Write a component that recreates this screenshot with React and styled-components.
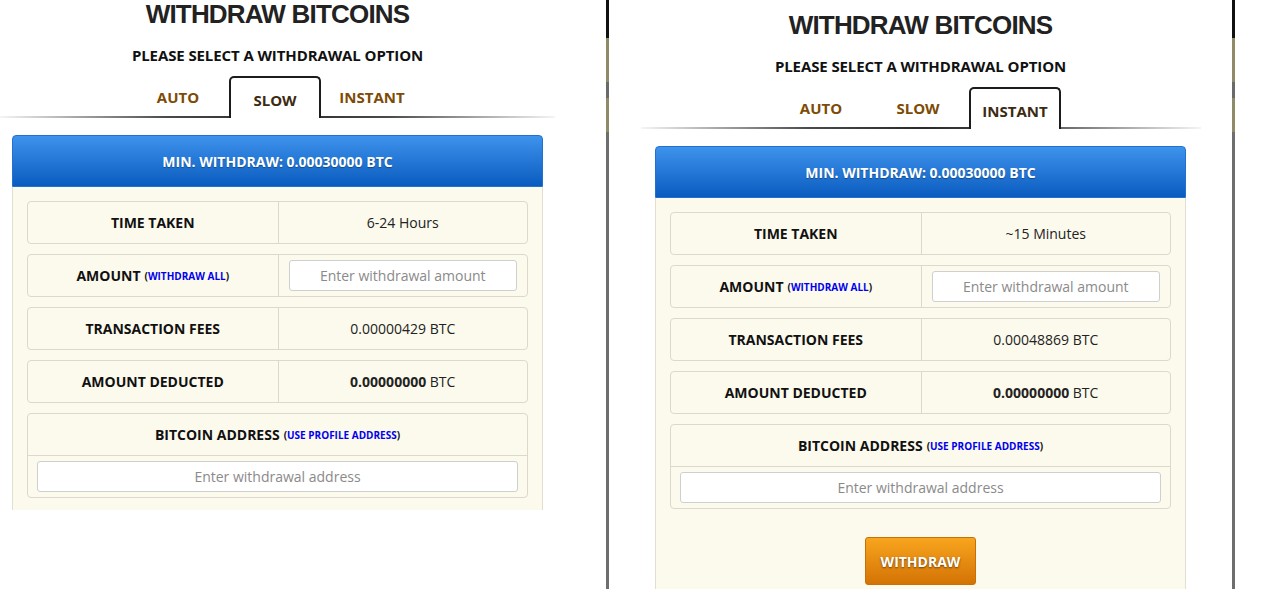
import React from 'react';
import styled, { createGlobalStyle } from 'styled-components';

const GlobalStyle = createGlobalStyle`
  body {
    margin: 0;
    background: #fff;
    font-family: "Open Sans", "Liberation Sans", sans-serif;
  }
  * { box-sizing: border-box; }
`;

const Page = styled.div`
  display: flex;
  align-items: flex-start;
  height: 589px;
  overflow: hidden;
`;

const Screen = styled.div`
  width: ${p => p.$width}px;
  height: ${p => p.$height}px;
  padding-top: ${p => p.$top}px;
  overflow: hidden;
  background: #fff;
`;

const Device = styled.div`
  display: flex;
  margin-left: 51px;
  height: 589px;
`;

const Bezel = styled.div`
  width: 3px;
  height: 100%;
  background: linear-gradient(
    #111 0, #111 38px,
    #8f8a68 38px, #8f8a68 82px,
    #6a6a6a 82px, #6a6a6a 98px,
    #8f8a68 98px, #8f8a68 132px,
    #6e6e6e 132px
  );
`;

const Title = styled.h1`
  margin: 0;
  padding-top: 1px;
  font-family: "Liberation Sans", Arial, sans-serif;
  font-size: 26px;
  line-height: 26px;
  letter-spacing: -0.8px;
  font-weight: 700;
  color: #222;
  text-align: center;
`;

const Subtitle = styled.h3`
  margin: 18px 0 0;
  font-size: 15px;
  line-height: 20px;
  font-weight: 700;
  letter-spacing: -0.1px;
  color: #111;
  text-align: center;
`;

const TabBar = styled.div`
  display: flex;
  justify-content: center;
  max-width: 560px;
  height: 42px;
  margin: 11px auto 0;
  padding-right: 5px;
  background:
    linear-gradient(to right, rgba(0,0,0,0.04), #4a4a4a 30%, #2a2a2a 50%, #4a4a4a 70%, rgba(0,0,0,0.04))
    bottom / 100% 2px no-repeat;
`;

const Tab = styled.div`
  width: 92px;
  margin: 0 2.5px;
  height: 42px;
  display: flex;
  align-items: center;
  justify-content: center;
  font-size: 15px;
  font-weight: 700;
  color: ${p => (p.$active ? '#3d2a12' : '#7d4b05')};
  ${p => p.$active && `
    background: #fff;
    border: 2px solid #1c1c1c;
    border-bottom: none;
    border-radius: 5px 5px 0 0;
    padding-top: 4px;
  `}
`;

const Panel = styled.div`
  max-width: 531px;
  margin: 17px auto 0;
`;

const PanelHead = styled.div`
  height: 52px;
  display: flex;
  align-items: center;
  justify-content: center;
  background: linear-gradient(#3e93ec, #0a5bbf);
  border: 1px solid #2470cf;
  border-radius: 4px 4px 0 0;
  color: #fff;
  font-size: 14px;
  font-weight: 700;
  text-shadow: 0 1px 1px rgba(0, 0, 0, 0.35);
`;

const PanelBody = styled.div`
  display: flex;
  flex-direction: column;
  gap: 10px;
  padding: 14px 14px 30px;
  background: #fcfaed;
  border-left: 1px solid #e2dfd2;
  border-right: 1px solid #e2dfd2;
`;

const Row = styled.div`
  display: grid;
  grid-template-columns: 1fr 1fr;
  height: 43px;
  border: 1px solid #dcd9cc;
  border-radius: 4px;
`;

const Cell = styled.div`
  display: flex;
  align-items: center;
  justify-content: center;
  padding: 0 10px;
  font-size: 14px;
  font-weight: ${p => (p.$label ? 700 : 400)};
  color: ${p => (p.$label ? '#111' : '#222')};
  & + & {
    border-left: 1px solid #dcd9cc;
  }
`;

const Hint = styled.span`
  margin-left: 4px;
  font-size: 10px;
  font-weight: 700;
  color: #111;
  a {
    color: #0000ee;
    text-decoration: none;
  }
`;

const Field = styled.input`
  width: 100%;
  height: 31px;
  border: 1px solid #cfcfcf;
  border-radius: 3px;
  background: #fff;
  font-family: "Open Sans", "Liberation Sans", sans-serif;
  font-size: 14px;
  text-align: center;
  color: #333;
  outline: none;
  &::placeholder {
    color: #8a8a8a;
  }
`;

const AddressBox = styled.div`
  border: 1px solid #dcd9cc;
  border-radius: 4px;
`;

const AddressHead = styled.div`
  height: 42px;
  display: flex;
  align-items: center;
  justify-content: center;
  border-bottom: 1px solid #dcd9cc;
  font-size: 14px;
  font-weight: 700;
  color: #111;
`;

const AddressInput = styled.div`
  padding: 5px 9px 5px;
`;

const WithdrawButton = styled.button`
  align-self: center;
  width: 111px;
  height: 48px;
  margin-top: 18px;
  border: 1px solid #c86f06;
  border-radius: 3px;
  background: linear-gradient(#f8a51e, #d47305);
  color: #fff;
  font-family: "Open Sans", "Liberation Sans", sans-serif;
  font-size: 14px;
  font-weight: 700;
  text-shadow: 0 1px 2px rgba(60, 30, 0, 0.7);
  cursor: pointer;
`;

const OPTIONS = ['AUTO', 'SLOW', 'INSTANT'];

function WithdrawForm({ option, time, fee, showButton }) {
  return (
    <>
      <Title>WITHDRAW BITCOINS</Title>
      <Subtitle>PLEASE SELECT A WITHDRAWAL OPTION</Subtitle>
      <TabBar>
        {OPTIONS.map(o => (
          <Tab key={o} $active={o === option}>{o}</Tab>
        ))}
      </TabBar>
      <Panel>
        <PanelHead>MIN. WITHDRAW: 0.00030000 BTC</PanelHead>
        <PanelBody>
          <Row>
            <Cell $label>TIME TAKEN</Cell>
            <Cell>{time}</Cell>
          </Row>
          <Row>
            <Cell $label>
              AMOUNT<Hint>(<a href="#all">WITHDRAW ALL</a>)</Hint>
            </Cell>
            <Cell>
              <Field placeholder="Enter withdrawal amount" />
            </Cell>
          </Row>
          <Row>
            <Cell $label>TRANSACTION FEES</Cell>
            <Cell>{fee} BTC</Cell>
          </Row>
          <Row>
            <Cell $label>AMOUNT DEDUCTED</Cell>
            <Cell><b>0.00000000</b>&nbsp;BTC</Cell>
          </Row>
          <AddressBox>
            <AddressHead>
              BITCOIN ADDRESS<Hint>(<a href="#profile">USE PROFILE ADDRESS</a>)</Hint>
            </AddressHead>
            <AddressInput>
              <Field placeholder="Enter withdrawal address" />
            </AddressInput>
          </AddressBox>
          {showButton && <WithdrawButton>WITHDRAW</WithdrawButton>}
        </PanelBody>
      </Panel>
    </>
  );
}

export default function App() {
  return (
    <>
      <GlobalStyle />
      <Page>
        <Screen $width={555} $height={510} $top={0}>
          <WithdrawForm option="SLOW" time="6-24 Hours" fee="0.00000429" />
        </Screen>
        <Device>
          <Bezel />
          <Screen $width={623} $height={589} $top={11}>
            <WithdrawForm option="INSTANT" time="~15 Minutes" fee="0.00048869" showButton />
          </Screen>
          <Bezel />
        </Device>
      </Page>
    </>
  );
}
